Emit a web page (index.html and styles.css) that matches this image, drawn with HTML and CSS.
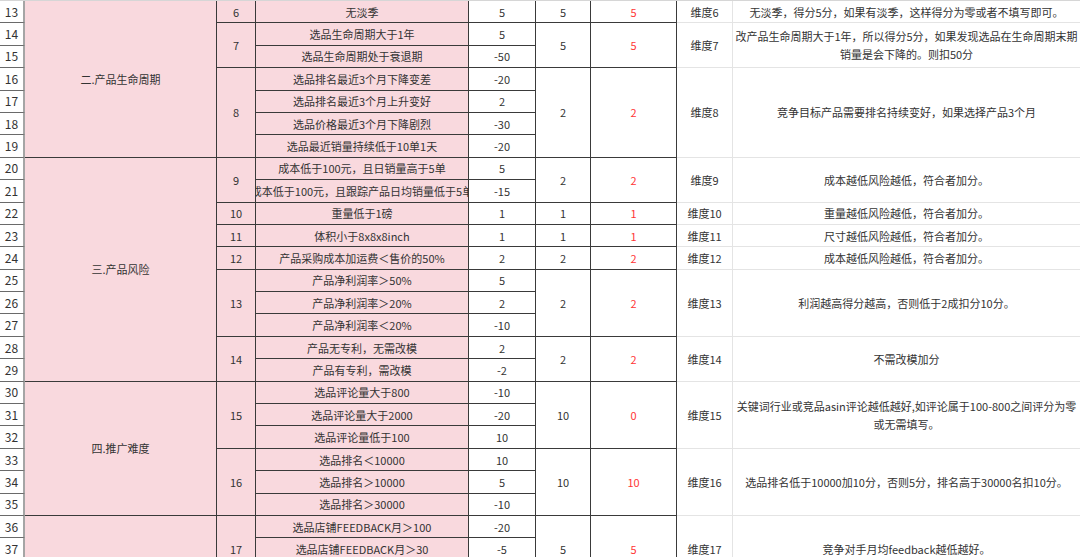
FILE: index.html
```html
<!DOCTYPE html>
<html lang="zh-CN">
<head>
<meta charset="utf-8">
<title>选品评分表</title>
<link rel="stylesheet" href="styles.css">
</head>
<body>
<div class="sheet">
  <!-- 13 -->
  <div class="c n">13</div>
  <div class="c cat s7">二.产品生命周期</div>
  <div class="c pk">6</div>
  <div class="c pk">无淡季</div>
  <div class="c">5</div>
  <div class="c">5</div>
  <div class="c red">5</div>
  <div class="c wd">维度6</div>
  <div class="c ds">无淡季，得分5分，如果有淡季，这样得分为零或者不填写即可。</div>
  <!-- 14 -->
  <div class="c n">14</div>
  <div class="c pk s2">7</div>
  <div class="c pk">选品生命周期大于1年</div>
  <div class="c">5</div>
  <div class="c s2">5</div>
  <div class="c red s2">5</div>
  <div class="c wd s2">维度7</div>
  <div class="c ds s2">改产品生命周期大于1年，所以得分5分，如果发现选品在生命周期末期<br>销量是会下降的。则扣50分</div>
  <!-- 15 -->
  <div class="c n">15</div>
  <div class="c pk">选品生命周期处于衰退期</div>
  <div class="c">-50</div>
  <!-- 16 -->
  <div class="c n">16</div>
  <div class="c pk s4">8</div>
  <div class="c pk">选品排名最近3个月下降变差</div>
  <div class="c">-20</div>
  <div class="c s4">2</div>
  <div class="c red s4">2</div>
  <div class="c wd s4">维度8</div>
  <div class="c ds s4">竞争目标产品需要排名持续变好，如果选择产品3个月</div>
  <!-- 17 -->
  <div class="c n">17</div>
  <div class="c pk">选品排名最近3个月上升变好</div>
  <div class="c">2</div>
  <!-- 18 -->
  <div class="c n">18</div>
  <div class="c pk">选品价格最近3个月下降剧烈</div>
  <div class="c">-30</div>
  <!-- 19 -->
  <div class="c n">19</div>
  <div class="c pk">选品最近销量持续低于10单1天</div>
  <div class="c">-20</div>
  <!-- 20 -->
  <div class="c n">20</div>
  <div class="c cat s10">三.产品风险</div>
  <div class="c pk s2">9</div>
  <div class="c pk">成本低于100元，且日销量高于5单</div>
  <div class="c">5</div>
  <div class="c s2">2</div>
  <div class="c red s2">2</div>
  <div class="c wd s2">维度9</div>
  <div class="c ds s2">成本越低风险越低，符合者加分。</div>
  <!-- 21 -->
  <div class="c n">21</div>
  <div class="c pk">成本低于100元，且跟踪产品日均销量低于5单</div>
  <div class="c">-15</div>
  <!-- 22 -->
  <div class="c n">22</div>
  <div class="c pk">10</div>
  <div class="c pk">重量低于1磅</div>
  <div class="c">1</div>
  <div class="c">1</div>
  <div class="c red">1</div>
  <div class="c wd">维度10</div>
  <div class="c ds">重量越低风险越低，符合者加分。</div>
  <!-- 23 -->
  <div class="c n">23</div>
  <div class="c pk">11</div>
  <div class="c pk">体积小于8x8x8inch</div>
  <div class="c">1</div>
  <div class="c">1</div>
  <div class="c red">1</div>
  <div class="c wd">维度11</div>
  <div class="c ds">尺寸越低风险越低，符合者加分。</div>
  <!-- 24 -->
  <div class="c n">24</div>
  <div class="c pk">12</div>
  <div class="c pk">产品采购成本加运费＜售价的50%</div>
  <div class="c">2</div>
  <div class="c">2</div>
  <div class="c red">2</div>
  <div class="c wd">维度12</div>
  <div class="c ds">成本越低风险越低，符合者加分。</div>
  <!-- 25 -->
  <div class="c n">25</div>
  <div class="c pk s3">13</div>
  <div class="c pk">产品净利润率＞50%</div>
  <div class="c">5</div>
  <div class="c s3">2</div>
  <div class="c red s3">2</div>
  <div class="c wd s3">维度13</div>
  <div class="c ds s3">利润越高得分越高，否则低于2成扣分10分。</div>
  <!-- 26 -->
  <div class="c n">26</div>
  <div class="c pk">产品净利润率＞20%</div>
  <div class="c">2</div>
  <!-- 27 -->
  <div class="c n">27</div>
  <div class="c pk">产品净利润率＜20%</div>
  <div class="c">-10</div>
  <!-- 28 -->
  <div class="c n">28</div>
  <div class="c pk s2">14</div>
  <div class="c pk">产品无专利，无需改模</div>
  <div class="c">2</div>
  <div class="c s2">2</div>
  <div class="c red s2">2</div>
  <div class="c wd s2">维度14</div>
  <div class="c ds s2">不需改模加分</div>
  <!-- 29 -->
  <div class="c n">29</div>
  <div class="c pk">产品有专利，需改模</div>
  <div class="c">-2</div>
  <!-- 30 -->
  <div class="c n">30</div>
  <div class="c cat s6">四.推广难度</div>
  <div class="c pk s3">15</div>
  <div class="c pk">选品评论量大于800</div>
  <div class="c">-10</div>
  <div class="c s3">10</div>
  <div class="c red s3">0</div>
  <div class="c wd s3">维度15</div>
  <div class="c ds s3">关键词行业或竞品asin评论越低越好,如评论属于100-800之间评分为零<br>或无需填写。</div>
  <!-- 31 -->
  <div class="c n">31</div>
  <div class="c pk">选品评论量大于2000</div>
  <div class="c">-20</div>
  <!-- 32 -->
  <div class="c n">32</div>
  <div class="c pk">选品评论量低于100</div>
  <div class="c">10</div>
  <!-- 33 -->
  <div class="c n">33</div>
  <div class="c pk s3">16</div>
  <div class="c pk">选品排名＜10000</div>
  <div class="c">10</div>
  <div class="c s3">10</div>
  <div class="c red s3">10</div>
  <div class="c wd s3">维度16</div>
  <div class="c ds s3">选品排名低于10000加10分，否则5分，排名高于30000名扣10分。</div>
  <!-- 34 -->
  <div class="c n">34</div>
  <div class="c pk">选品排名＞10000</div>
  <div class="c">5</div>
  <!-- 35 -->
  <div class="c n">35</div>
  <div class="c pk">选品排名＞30000</div>
  <div class="c">-10</div>
  <!-- 36 -->
  <div class="c n">36</div>
  <div class="c cat s3"></div>
  <div class="c pk s3">17</div>
  <div class="c pk">选品店铺FEEDBACK月＞100</div>
  <div class="c">-20</div>
  <div class="c s3">5</div>
  <div class="c red s3">5</div>
  <div class="c wd s3">维度17</div>
  <div class="c ds s3">竞争对手月均feedback越低越好。</div>
  <!-- 37 -->
  <div class="c n">37</div>
  <div class="c pk">选品店铺FEEDBACK月＞30</div>
  <div class="c">-5</div>
  <!-- 38 -->
  <div class="c n">38</div>
  <div class="c pk"></div>
  <div class="c"></div>
</div>
</body>
</html>
```

FILE: styles.css
```css
html, body {
  margin: 0;
  padding: 0;
  background: #ffffff;
  overflow: hidden;
}

body {
  font-family: "Noto Sans CJK SC", "Noto Sans", sans-serif;
  font-size: 11px;
  color: #333333;
}

.sheet {
  display: grid;
  width: 1080px;
  grid-template-columns: 25px 192px 39px 213px 67px 55px 86px 56px 347px;
  grid-template-rows: repeat(26, 22.4px);
  border-top: 1px solid #d6d6d6;
}

.c {
  box-sizing: border-box;
  display: flex;
  align-items: center;
  justify-content: center;
  text-align: center;
  white-space: nowrap;
  overflow: hidden;
  line-height: 18px;
  border-right: 1px solid #3a3a3a;
  border-bottom: 1px solid #3a3a3a;
  background: #ffffff;
}

.n {
  font-size: 12px;
  border-right: 2px solid #a5a5a5;
  border-bottom: 1px solid #6a6a6a;
}

.cat,
.pk {
  background: #f9d9de;
}

.red {
  color: #ff3535;
}

.wd {
  border-right: 1px solid #e4e4e4;
  border-bottom: 1px solid #e4e4e4;
}

.ds {
  white-space: normal;
  border-right: none;
  border-bottom: 1px solid #e4e4e4;
}

.s2 { grid-row: span 2; }
.s3 { grid-row: span 3; }
.s4 { grid-row: span 4; }
.s6 { grid-row: span 6; }
.s7 { grid-row: span 7; }
.s10 { grid-row: span 10; }
```
